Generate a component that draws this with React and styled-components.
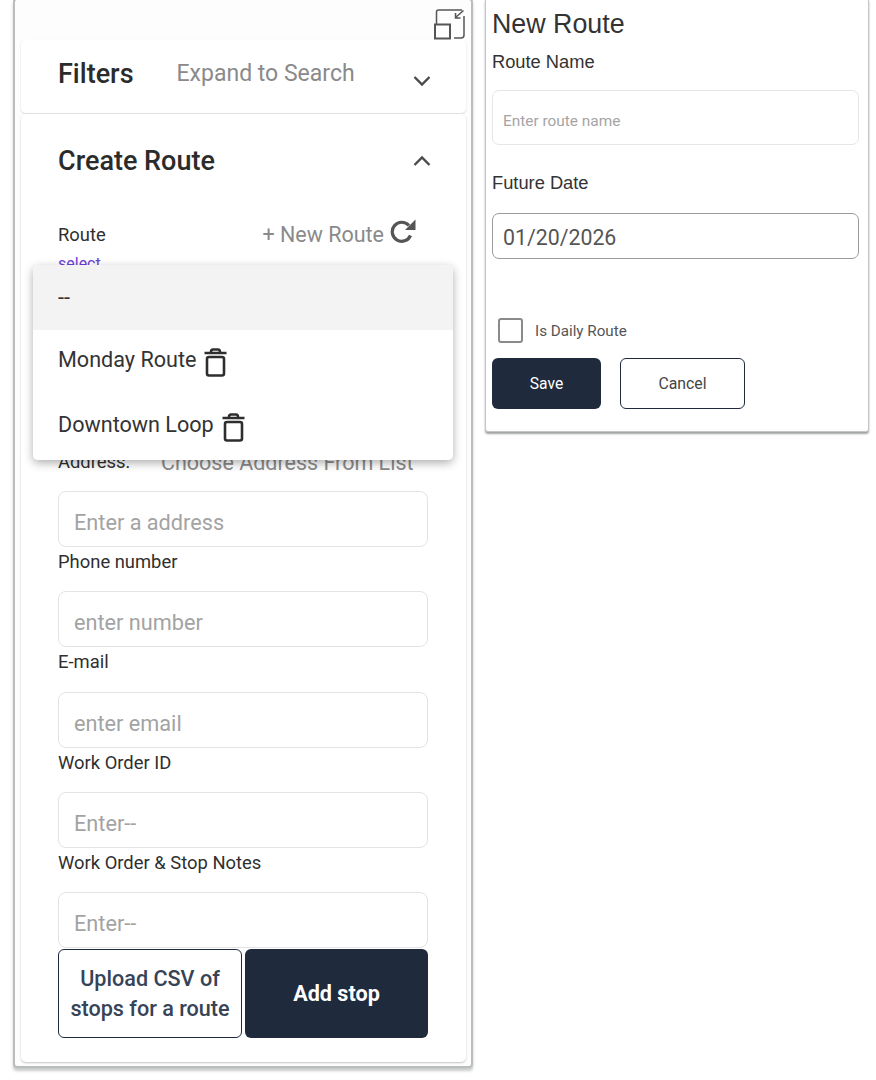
import React from 'react'
import styled, { createGlobalStyle } from 'styled-components'

const Global = createGlobalStyle`
body {
  margin: 0;
  background: #fff;
  font-family: Roboto, "Liberation Sans", sans-serif;
  color: #2b2b2b;
}
* { box-sizing: border-box; }
`

const Page = styled.div`
display: flex;
align-items: flex-start;
width: 876px;
height: 1080px;
overflow: hidden;
padding-left: 13px;
`

const SidePanel = styled.div`
width: 460px;
height: 1070px;
margin-top: -2px;
padding: 8px 5px 4px 6px;
background: #fdfdfd;
border: 2px solid #b9bdbb;
border-radius: 4px;
box-shadow: 0 3px 3px #c9cbca;
display: flex;
flex-direction: column;
`

const ResizeRow = styled.div`
display: flex;
justify-content: flex-end;
height: 32px;
flex-shrink: 0;
`

const FilterCard = styled.div`
height: 73px;
flex-shrink: 0;
background: #fff;
border-radius: 5px;
box-shadow: 0 1px 2px #d8d8d8;
display: flex;
align-items: flex-start;
padding: 19px 34px 0 37px;
`

const CardTitle = styled.div`
font-size: 27px;
font-weight: 500;
line-height: 30px;
color: #2b2b2b;
`

const Hint = styled.div`
font-size: 23px;
line-height: 30px;
color: #8a8a8a;
margin-left: 43px;
flex: 1;
`

const Chevron = styled.svg`
width: 20px;
height: 12px;
margin-top: ${p => p.$top}px;
fill: none;
stroke: #4a4a4a;
stroke-width: 2.4;
flex-shrink: 0;
`

const RouteCard = styled.div`
position: relative;
flex: 1;
margin-top: 1px;
background: #fff;
border-radius: 5px;
box-shadow: 0 1px 2px #c4c4c4;
padding: 32px 38px 0 37px;
`

const TitleRow = styled.div`
display: flex;
justify-content: space-between;
align-items: center;
height: 30px;
margin-right: -4px;
`

const RouteRow = styled.div`
display: flex;
justify-content: space-between;
align-items: center;
margin-top: 44px;
height: 30px;
padding-right: 12px;
`

const Label = styled.div`
font-size: 18.4px;
line-height: 20px;
color: #2f2f2f;
`

const NewRoute = styled.div`
display: flex;
align-items: center;
gap: 6px;
font-size: 21.5px;
color: #8a8a8a;
margin-top: -1px;
& > svg { margin-top: -7px; }
`

const SelectLink = styled.div`
font-size: 16px;
line-height: 16px;
color: #6d3fd6;
height: 14px;
margin-top: 6px;
`

const Dropdown = styled.div`
position: absolute;
top: 151px;
left: 12px;
right: 13px;
height: 195px;
background: #fff;
border-radius: 5px;
box-shadow: 0 3px 10px rgba(0, 0, 0, 0.32);
overflow: hidden;
z-index: 2;
`

const Option = styled.div`
height: 65px;
padding: 0 0 ${p => (p.$active ? 0 : 6)}px 25px;
display: flex;
align-items: center;
gap: 8px;
font-size: 21.6px;
color: #333;
background: ${p => (p.$active ? '#f3f3f3' : '#fff')};
& > svg { margin-top: 6px; }
`

const AddressRow = styled.div`
display: flex;
align-items: center;
margin-top: 180px;
height: 24px;
`

const AddressHint = styled.div`
font-size: 21.5px;
color: #8a8a8a;
margin-left: 31px;
white-space: nowrap;
`

const Field = styled.input`
display: block;
width: 370px;
height: 56px;
margin-top: ${p => p.$gap || 0}px;
padding: 7px 15px 0;
font-family: Roboto, sans-serif;
font-size: 21.7px;
background: #fff;
border: 1px solid #e3e3e3;
border-radius: 8px;
outline: none;
&::placeholder { color: #a3a3a3; opacity: 1; }
`

const StackLabel = styled(Label)`
height: 44.25px;
padding-top: 5px;
`

const ButtonRow = styled.div`
display: flex;
gap: 3px;
margin-top: 1px;
`

const UploadButton = styled.button`
width: 184px;
height: 89px;
padding: 0 6px;
background: #fff;
border: 1.5px solid #1f2a3c;
border-radius: 6px;
font-family: Roboto, sans-serif;
font-size: 21.6px;
font-weight: 500;
line-height: 30px;
color: #374357;
`

const AddButton = styled.button`
width: 183px;
height: 89px;
background: #1f2a3c;
border: none;
border-radius: 6px;
font-family: Roboto, sans-serif;
font-size: 21.6px;
font-weight: 700;
color: #fff;
`

const RoutePanel = styled.div`
width: 384px;
height: 434px;
margin-left: 12px;
margin-top: -2px;
padding: 9px 8px 0 6px;
background: #fff;
border: 1px solid #c4c6c5;
border-radius: 3px;
box-shadow: 0 2px 2px #9fa3a1;
`

const PanelTitle = styled.div`
font-family: "Liberation Sans", Arial, sans-serif;
font-size: 26.8px;
line-height: 32px;
color: #333;
`

const PanelLabel = styled.div`
font-family: "Liberation Sans", Arial, sans-serif;
font-size: 18.3px;
line-height: 22px;
color: #333;
margin-top: ${p => p.$gap}px;
`

const NameInput = styled.input`
display: block;
width: 367px;
height: 55px;
margin-top: 17px;
padding: 6px 10px 0;
font-family: Roboto, sans-serif;
font-size: 15.4px;
background: #fff;
border: 1px solid #e6e6e6;
border-radius: 7px;
outline: none;
&::placeholder { color: #a5a5a5; opacity: 1; }
`

const DateInput = styled.input`
display: block;
width: 367px;
height: 46px;
margin-top: 19px;
padding: 2px 10px 0;
font-family: Roboto, sans-serif;
font-size: 21.3px;
color: #555;
background: #fff;
border: 1px solid #9a9a9a;
border-radius: 7px;
outline: none;
`

const CheckRow = styled.label`
display: flex;
align-items: center;
gap: 12px;
margin-top: 59px;
margin-left: 6px;
font-size: 15.2px;
color: #555;
`

const Check = styled.input`
appearance: none;
width: 25px;
height: 25px;
margin: 0;
border: 2px solid #8a8a8a;
border-radius: 3px;
background: #fff;
`

const PanelButtons = styled.div`
display: flex;
gap: 19px;
margin-top: 15px;
`

const SaveButton = styled.button`
width: 109px;
height: 51px;
background: #1f2a3c;
border: none;
border-radius: 6px;
font-family: Roboto, sans-serif;
font-size: 15.6px;
color: #fff;
`

const CancelButton = styled.button`
width: 125px;
height: 51px;
background: #fff;
border: 1.5px solid #1f2a3c;
border-radius: 6px;
font-family: Roboto, sans-serif;
font-size: 15.8px;
color: #444;
`

function ResizeIcon() {
  return (
    <svg width="32" height="32" viewBox="0 0 32 32" fill="none" stroke="#555" strokeWidth="1.5">
      <path d="M2.5 17V4q0-2 2-2H28" />
      <path d="M30 8v19q0 3-3 3h-7" />
      <rect x="1" y="16.5" width="15" height="14" strokeWidth="2" />
      <path d="M29.5 2.5l-8 7M21.5 5v5h5" />
    </svg>
  )
}

function RefreshIcon() {
  return (
    <svg width="26" height="25" viewBox="0 0 26 25" fill="none">
      <path d="M20.5 16.5a9.5 9.5 0 1 1-1.6-10" stroke="#555" strokeWidth="3.2" />
      <path d="M25.5 0.5v10.5H15z" fill="#555" />
    </svg>
  )
}

function TrashIcon() {
  return (
    <svg width="23" height="29" viewBox="0 0 23 29" fill="none" stroke="#2e2e2e" strokeWidth="2.6">
      <path d="M0.5 5h22" />
      <path d="M7 4q0-2.5 2-2.5h5q2 0 2 2.500" />
      <rect x="3" y="9" width="17" height="18.500" rx="2" />
    </svg>
  )
}

const LabeledField = ({ label, placeholder }) => (
  <>
    <StackLabel>{label}</StackLabel>
    <Field placeholder={placeholder} />
  </>
)

export default function App() {
  return (
    <Page>
      <Global />
      <SidePanel>
        <ResizeRow>
          <ResizeIcon />
        </ResizeRow>
        <FilterCard>
          <CardTitle>Filters</CardTitle>
          <Hint>Expand to Search</Hint>
          <Chevron $top={16} viewBox="0 0 20 12">
            <path d="M2.500 2l7.500 7.500L17.500 2" />
          </Chevron>
        </FilterCard>
        <RouteCard>
          <TitleRow>
            <CardTitle>Create Route</CardTitle>
            <Chevron $top={0} viewBox="0 0 20 12">
              <path d="M2.500 10L10 2.500 17.500 10" />
            </Chevron>
          </TitleRow>
          <RouteRow>
            <Label>Route</Label>
            <NewRoute>+ New Route <RefreshIcon /></NewRoute>
          </RouteRow>
          <SelectLink>select</SelectLink>
          <Dropdown>
            <Option $active>--</Option>
            <Option>Monday Route <TrashIcon /></Option>
            <Option>Downtown Loop <TrashIcon /></Option>
          </Dropdown>
          <AddressRow>
            <Label>Address:</Label>
            <AddressHint>Choose Address From List</AddressHint>
          </AddressRow>
          <Field $gap={17} placeholder="Enter a address" />
          <LabeledField label="Phone number" placeholder="enter number" />
          <LabeledField label="E-mail" placeholder="enter email" />
          <LabeledField label="Work Order ID" placeholder="Enter--" />
          <LabeledField label="Work Order & Stop Notes" placeholder="Enter--" />
          <ButtonRow>
            <UploadButton>Upload CSV of stops for a route</UploadButton>
            <AddButton>Add stop</AddButton>
          </ButtonRow>
        </RouteCard>
      </SidePanel>
      <RoutePanel>
        <PanelTitle>New Route</PanelTitle>
        <PanelLabel $gap={11}>Route Name</PanelLabel>
        <NameInput placeholder="Enter route name" />
        <PanelLabel $gap={27}>Future Date</PanelLabel>
        <DateInput readOnly value="01/20/2026" />
        <CheckRow>
          <Check type="checkbox" />
          Is Daily Route
        </CheckRow>
        <PanelButtons>
          <SaveButton>Save</SaveButton>
          <CancelButton>Cancel</CancelButton>
        </PanelButtons>
      </RoutePanel>
    </Page>
  )
}
